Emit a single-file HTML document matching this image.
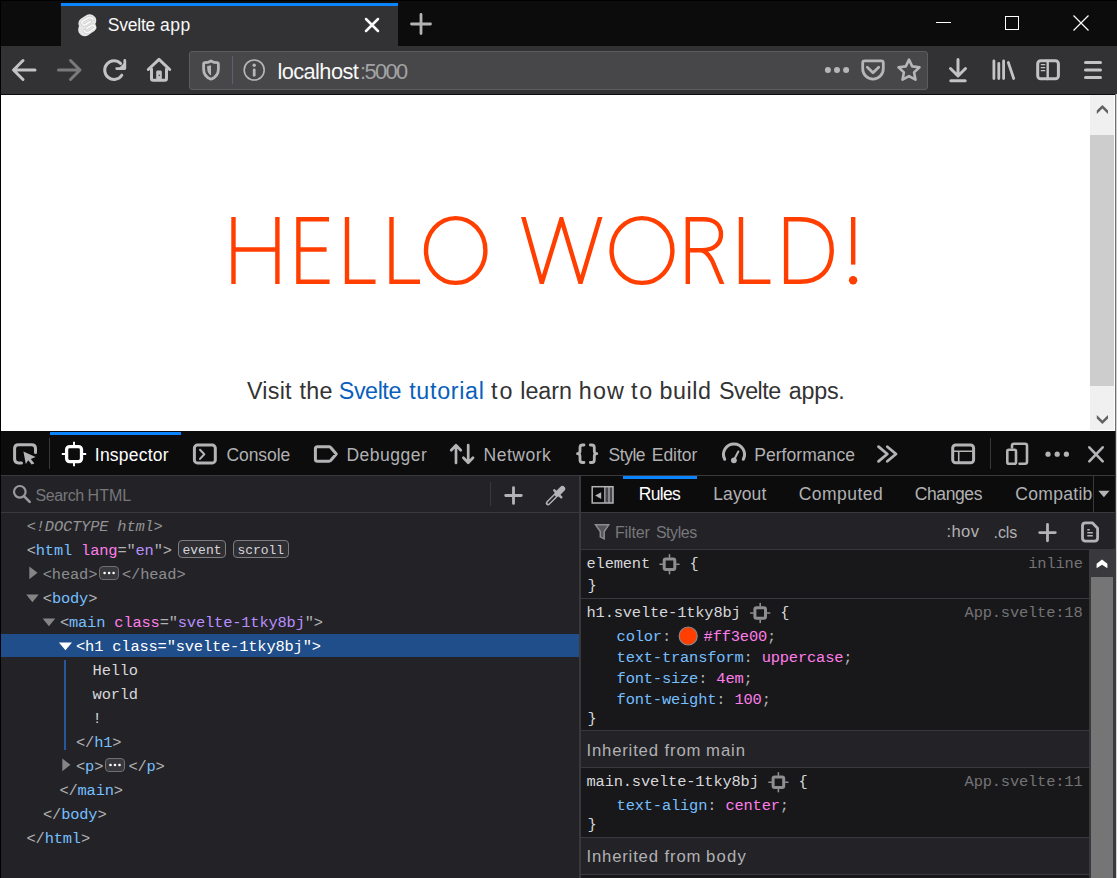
<!DOCTYPE html>
<html lang="en"><head><meta charset="utf-8"><title>Svelte app</title>
<style>
html,body{margin:0;padding:0;background:#0c0c0d;}
body{width:1117px;height:878px;overflow:hidden;}
#root{position:relative;width:1117px;height:878px;overflow:hidden;background:#0c0c0d;font-family:"Liberation Sans",sans-serif;}
#root div,#root svg{position:absolute;}
.t{position:absolute;white-space:pre;display:block;}
.s{font-family:"Liberation Sans",sans-serif;}
.m{font-family:"Liberation Mono",monospace;}
.ln{background:#38383d;}

</style></head>
<body>
<div id="root">
<!-- ================= window frame ================= -->
<div style="left:0;top:0;width:1117px;height:46px;background:#0c0c0d"></div>
<div style="left:0;top:0;width:1117px;height:1px;background:#000"></div>
<!-- selected tab -->
<div style="left:60.600px;top:3px;width:337.400px;height:43px;background:#323234"></div>
<div style="left:60.600px;top:3px;width:337.400px;height:3px;background:#0a84ff"></div>
<!-- nav bar -->
<div style="left:0;top:46px;width:1117px;height:48px;background:#323234"></div>
<div style="left:0;top:94px;width:1117px;height:1px;background:#0c0c0d"></div>
<!-- url bar -->
<div style="left:189px;top:51px;width:739px;height:39px;background:#474749;border:1px solid #5c5c5e;box-sizing:border-box;border-radius:3px"></div>
<div style="left:232px;top:56px;width:1px;height:28px;background:#5b6172"></div>

<!-- ================= page ================= -->
<div style="left:1px;top:95px;width:1114px;height:336px;background:#fff"></div>
<div style="left:1090px;top:95px;width:24px;height:335px;background:#f0f0f0"></div>
<div style="left:1090px;top:135px;width:24px;height:251px;background:#cdcdcd"></div>
<svg style="left:1090px;top:95px" width="25" height="336" viewBox="0 0 25 336">
  <path d="M6.8 15.6L12.4 9.9L18 15.6V19.1L12.4 13.4L6.8 19.100Z" fill="#606060"/>
  <path d="M6.8 323.400L12.4 329.100L18 323.400V319.900L12.4 325.600L6.8 319.900Z" fill="#606060"/>
</svg>

<!-- H1 drawn as thin strokes -->
<svg id="h1" style="left:0;top:95px" width="1090" height="336" viewBox="0 95 1090 336">
<defs><clipPath id="cap"><rect x="500" y="217" width="120" height="67"/></clipPath><clipPath id="cap2"><rect x="680" y="215" width="60" height="69"/></clipPath></defs>
<g fill="none" stroke="#ff3e00" stroke-width="4.4">
  <!-- H -->
  <path d="M233.5 217V284M277.4 217V284M233.5 249.5H277.4"/>
  <!-- E -->
  <path d="M329 219.2H298.4V281.8H329.6M298.4 249.5H326.6"/>
  <!-- L L -->
  <path d="M347 217V281.8H375.5"/>
  <path d="M391.5 217V281.8H420"/>
  <!-- O -->
  <ellipse cx="455.700" cy="250.5" rx="29.700" ry="32.4"/>
  <!-- W -->
  <path clip-path="url(#cap)" d="M522.800 215L541.800 283L561.400 219L580.500 283L600.800 215"/>
  <!-- O -->
  <ellipse cx="642" cy="250.5" rx="30.400" ry="32.4"/>
  <!-- R -->
  <path clip-path="url(#cap2)" d="M687.8 284V219.2H703C715 219.2 721 225.500 721 234.500C721 244 713.500 250.200 702 250.200H687.8M701 250.200C706.500 251.500 709.500 255.500 712.300 261L723.300 287"/>
  <!-- L -->
  <path d="M741 217V281.8H770.4"/>
  <!-- D -->
  <path d="M786.1 219.2V281.8H800C820 281.8 831.7 270 831.7 250C831.7 231 820 219.2 800 219.2Z"/>
  <!-- ! -->
  <path d="M853.2 217V264.600"/>
</g>
<circle cx="853.100" cy="280.200" r="4.200" fill="#ff3e00"/>
</svg>

<!-- ================= devtools ================= -->
<div style="left:0;top:431px;width:1117px;height:447px;background:#0c0c0d"></div>
<div style="left:50px;top:432px;width:131px;height:3px;background:#0a84ff"></div>
<div class="ln" style="left:1px;top:475px;width:1114px;height:1px"></div>
<!-- left pane -->
<div style="left:1px;top:476px;width:578px;height:402px;background:#232327"></div>
<div class="ln" style="left:1px;top:512px;width:1114px;height:1px"></div>
<!-- selected row -->
<div style="left:1px;top:633.5px;width:579px;height:23.5px;background:#204e8a"></div>
<!-- guide line -->
<div style="left:64.2px;top:660px;width:1.5px;height:89.5px;background:#26579a"></div>
<!-- right pane -->
<div style="left:581px;top:513px;width:534px;height:36px;background:#232327"></div>
<div class="ln" style="left:581px;top:549px;width:534px;height:1px"></div>
<div style="left:581px;top:550px;width:508px;height:328px;background:#18181a"></div>
<div class="ln" style="left:581px;top:598px;width:508px;height:1px"></div>
<div class="ln" style="left:581px;top:730px;width:508px;height:1px"></div>
<div style="left:581px;top:731px;width:508px;height:36px;background:#232327"></div>
<div class="ln" style="left:581px;top:767px;width:508px;height:1px"></div>
<div class="ln" style="left:581px;top:837px;width:508px;height:1px"></div>
<div style="left:581px;top:838px;width:508px;height:36px;background:#232327"></div>
<div class="ln" style="left:581px;top:874px;width:508px;height:1px"></div>
<!-- rules scrollbar -->
<div style="left:1089px;top:550px;width:26px;height:328px;background:#39393d"></div>
<div style="left:1091px;top:577px;width:22px;height:301px;background:#757575"></div>
<svg style="left:1089px;top:550px" width="26" height="27" viewBox="0 0 26 27"><path d="M7.600 13.700L13 9.600L18.400 13.700V18.300L13 14.800L7.600 18.300Z" fill="#ffffff"/></svg>
<div style="left:623px;top:476px;width:74px;height:3px;background:#0a84ff"></div>
<!-- splitter -->
<div class="ln" style="left:579px;top:476px;width:2px;height:402px"></div>
<!-- toolbar separators -->
<div style="left:49px;top:438px;width:1px;height:31px;background:#38383d"></div>
<div style="left:990px;top:438px;width:1px;height:31px;background:#38383d"></div>
<div style="left:490px;top:482px;width:1px;height:24px;background:#38383d"></div>
<div style="left:1093px;top:476px;width:1px;height:36px;background:#38383d"></div>

<!-- window side borders -->
<div style="left:0;top:0;width:1px;height:878px;background:#000"></div>
<div style="left:1115px;top:94px;width:1px;height:337px;background:#6e6e6e"></div>
<div style="left:1115px;top:431px;width:1px;height:447px;background:#3c3c3e"></div>
<div style="left:1116px;top:94px;width:1px;height:784px;background:#cfcfcf"></div>

<!-- ================= icon overlay (absolute pixel coords) ================= -->
<svg id="icons" style="left:0;top:0" width="1117" height="878" viewBox="0 0 1117 878" fill="none" stroke-linecap="round" stroke-linejoin="round">

<!-- ===== tab bar ===== -->
<!-- svelte favicon -->
<g id="favicon" transform="translate(87.15 25.05) scale(0.925 0.94) translate(-84 -25.75)">
  <path d="M92.6 17.2c-2.2-3.1-6.500-4.000-9.600-2.000l-5.500 3.500c-1.500 0.900-2.500 2.500-2.800 4.200-0.300 1.400 0 2.900 0.600 4.200-0.500 0.700-0.800 1.500-0.900 2.300-0.300 1.800 0.100 3.600 1.100 5.100 2.200 3.100 6.500 4.000 9.600 2.000l5.500-3.500c1.500-0.900 2.500-2.500 2.800-4.200 0.300-1.400 0-2.900-0.600-4.200 0.500-0.700 0.800-1.500 0.900-2.300 0.400-1.800 0-3.600-1.100-5.100z" fill="#e6e6e6" stroke="none"/>
  <path d="M90.3 19.6c-1.300-1.900-3.900-2.400-5.800-1.200l-4.600 2.900c-1.100 0.700-1.500 2.100-0.900 3.200 0.700 1.200 2.100 1.500 3.300 0.800l5.300-3.300M80.700 31.900c1.300 1.900 3.900 2.400 5.800 1.200l4.600-2.900c1.100-0.700 1.500-2.100 0.900-3.200-0.700-1.200-2.100-1.500-3.300-0.800l-5.300 3.300" stroke="#cfcfcf" stroke-width="3.400"/>
  <path d="M90.3 19.6c-1.300-1.900-3.900-2.400-5.800-1.200l-4.600 2.900c-1.100 0.700-1.500 2.100-0.900 3.200 0.700 1.200 2.100 1.500 3.300 0.800l5.300-3.300M80.700 31.900c1.300 1.900 3.900 2.400 5.800 1.200l4.600-2.900c1.100-0.700 1.500-2.100 0.900-3.200-0.700-1.200-2.100-1.500-3.300-0.800l-5.300 3.300" stroke="#f7f7f7" stroke-width="1.900"/>
</g>
<!-- tab close -->
<path d="M366 19L378 31M378 19L366 31" stroke="#f9f9fa" stroke-width="2.5"/>
<!-- new tab + -->
<path d="M411.5 24H430.5M421 14.500V33.500" stroke="#b4b4b6" stroke-width="2.8"/>
<!-- window controls -->
<g stroke="#ffffff" stroke-width="1.1" stroke-linecap="butt" stroke-linejoin="miter" shape-rendering="crispEdges">
  <path d="M936 22.500H951"/>
  <rect x="1005.500" y="16.500" width="13" height="13"/>
</g>
<path d="M1073.500 15.500L1088.500 30.500M1088.500 15.500L1073.500 30.500" stroke="#ffffff" stroke-width="1.2" stroke-linecap="butt"/>

<!-- ===== nav bar ===== -->
<g stroke="#c3c3c5" stroke-width="3">
  <!-- back -->
  <path d="M35 70H14M23 60.500L13.500 70L23 79.500"/>
  <!-- reload -->
  <path d="M121.800 75.200A9.300 9.300 0 1 1 120.600 63.500"/>
  <path d="M124.800 60.500V68.600H116.700" stroke-width="2.800"/>
  <path d="M124.800 62.300V68.600H118.500Z" fill="#c3c3c5" stroke="none"/>
  <!-- home -->
  <path d="M148.300 69.500L159 59.300L169.700 69.500" />
  <path d="M151.500 69V78.500Q151.500 80.300 153.300 80.300H164.700Q166.500 80.300 166.500 78.500V69" />
  <path d="M156.200 80.500V72Q156.200 70.600 157.600 70.600H160.400Q161.800 70.600 161.800 72V80.500Z" fill="#c3c3c5" stroke="none"/><circle cx="159.300" cy="75.400" r="0.800" fill="#555557" stroke="none"/>
  <!-- shield -->
  <path d="M211 60.900C209 62 206.500 62.600 204.600 62.700Q203.600 62.800 203.600 63.800V69C203.600 74.800 207.400 77.900 211 79.200C214.600 77.900 218.400 74.800 218.400 69V63.800Q218.400 62.800 217.400 62.700C215.500 62.600 213 62 211 60.900Z" stroke="#b6b6b8" stroke-width="2.800"/>
  <path d="M211 65.200C209.500 65.700 208.300 66 207.200 66.100V68.700C207.200 71.700 208.700 74 211 75.400Z" fill="#b6b6b8" stroke="none"/>
  <!-- info -->
  <circle cx="254.200" cy="70" r="10" stroke-width="1.600" stroke="#b6b6b8"/>
  <path d="M254.200 69.800V75.300" stroke="#b6b6b8" stroke-width="2.800"/>
  <circle cx="254.200" cy="65.200" r="1.700" fill="#b6b6b8" stroke="none"/>
  <!-- page action dots -->
  <g fill="#b6b6b8" stroke="none"><circle cx="827.900" cy="70" r="3"/><circle cx="837" cy="70" r="3"/><circle cx="846.100" cy="70" r="3"/></g>
  <!-- pocket -->
  <path d="M864.700 60.800H881.300Q883.300 60.800 883.300 62.800V68.800A10.300 10.300 0 0 1 862.700 68.800V62.800Q862.700 60.800 864.700 60.800Z" stroke="#b6b6b8" stroke-width="2.800"/>
  <path d="M867.300 67.200L873 72.700L878.700 67.200" stroke="#b6b6b8" stroke-width="2.800"/>
  <!-- star -->
  <path d="M909 59.600L912.200 66.400L919.500 67.300L914.100 72.400L915.500 79.700L909 76.100L902.500 79.700L903.900 72.400L898.500 67.300L905.800 66.400Z" stroke="#b6b6b8" stroke-width="2.600"/>
  <!-- download -->
  <path d="M958 59.500V75.500M950.500 68.500L958 76L965.500 68.500M950.800 80.700H965.200"/>
  <!-- library -->
  <path d="M993.900 61V78.500M998.800 63.500V78.500M1003.600 61V78.500M1008.300 62.500L1013.700 78.500" stroke-width="2.800"/>
  <!-- sidebar -->
  <rect x="1037.700" y="60.800" width="20.700" height="18" rx="3"/>
  <path d="M1047.700 61V79" stroke-width="2.400"/>
  <path d="M1041.300 64.700H1044.700M1041.300 67.700H1044.700M1041.300 70.700H1044.700" stroke-width="1.300"/>
  <!-- hamburger -->
  <path d="M1085.500 62.500H1100.500M1085.500 70H1100.500M1085.500 77.500H1100.500"/>
</g>
<!-- forward (disabled) -->
<path d="M58.500 70H79.500M70.500 60.500L80 70L70.500 79.500" stroke="#7a7a7c" stroke-width="3"/>

<!-- ===== devtools toolbar ===== -->
<g stroke="#b4b4b6" stroke-width="3">
  <!-- picker -->
  <path d="M21.500 462.900H18.500Q14.600 462.900 14.600 459V448.600Q14.600 444.700 18.500 444.700H31.600Q35.500 444.700 35.500 448.600V452.500"/>
  <path d="M23.400 451.400L35.600 457L30.800 459L34.400 463.400L31.600 464.600L28.300 460.300L25.800 464Z" fill="#b4b4b6" stroke="none"/>
  <!-- console -->
  <rect x="194.400" y="445.100" width="20.900" height="17.800" rx="3"/>
  <path d="M200 449.700L204.300 454.300L200 458.900" stroke-width="2"/>
  <!-- debugger -->
  <path d="M317.400 446.800H329Q330 446.800 330.700 447.500L336.300 454L330.700 460.500Q330 461.200 329 461.200H317.400Q315.400 461.200 315.400 459.200V448.800Q315.400 446.800 317.400 446.800Z"/>
  <!-- network -->
  <path d="M456 463V445.500M451.200 450.200L456 445.300L460.800 450.200M468.200 445V462.500M463.400 457.800L468.200 462.700L473 457.800" stroke-width="2.700"/>
  <!-- style editor braces -->
  <path d="M584 445H582.500Q580 445 580 447.500V451Q580 453.700 577.500 453.700Q580 453.700 580 456.400V460Q580 462.500 582.500 462.500H584" stroke-width="2.800"/>
  <path d="M590.300 445H591.800Q594.300 445 594.300 447.500V451Q594.300 453.700 596.800 453.700Q594.300 453.700 594.300 456.400V460Q594.300 462.500 591.800 462.500H590.300" stroke-width="2.800"/>
  <!-- performance -->
  <path d="M724.700 459.300A10.500 10.500 0 1 1 743.300 459.300"/>
  <path d="M734 460L738.300 451.500" stroke-width="2"/>
  <circle cx="733.900" cy="460.300" r="2.900" fill="#b4b4b6" stroke="none"/>
  <!-- chevrons -->
  <path d="M878.500 446.700L887.300 454L878.500 461.300M887.300 446.700L896 454L887.300 461.300" stroke-width="2.800"/>
  <!-- iframe picker -->
  <rect x="952.700" y="445" width="20.900" height="17.700" rx="3"/>
  <path d="M953 451.200H973.500M958.700 451.500V462.500" stroke-width="1.600"/>
  <!-- responsive -->
  <path d="M1012 447.500V445.700Q1012 443.700 1014 443.700H1025Q1027 443.700 1027 445.700V461.700Q1027 463.700 1025 463.700H1019.500" stroke-width="2.600"/>
  <rect x="1007.300" y="449.800" width="8.700" height="14" rx="1.500" stroke-width="2.600"/>
  <!-- meatball -->
  <g fill="#b4b4b6" stroke="none"><circle cx="1048" cy="454.200" r="2.600"/><circle cx="1057.200" cy="454.200" r="2.600"/><circle cx="1066.400" cy="454.200" r="2.600"/></g>
  <!-- close -->
  <path d="M1089.300 447.300L1102.700 461.300M1102.700 447.300L1089.300 461.300" stroke-width="2.600"/>
</g>
<!-- inspector (selected, white) -->
<g stroke="#ffffff">
  <rect x="66.600" y="446.600" width="14.900" height="15" rx="3" stroke-width="3.300"/>
  <path d="M74 441.800V445.500M74 463M74 462.800V466.200M61.800 454H65.500M82.600 454H86.200" stroke-width="1.900" stroke-linecap="butt"/>
</g>

<!-- ===== search row ===== -->
<circle cx="19.800" cy="491.800" r="5.800" stroke="#9a9a9c" stroke-width="2.200"/>
<path d="M24.200 496.300L29.700 501.800" stroke="#9a9a9c" stroke-width="2.600"/>
<path d="M505.700 495.500H521.300M513.500 487.600V503.400" stroke="#b4b4b6" stroke-width="2.800"/>
<!-- eyedropper -->
<g>
  <path d="M555.300 495.800L548 503.100" stroke="#b4b4b6" stroke-width="4.600"/>
  <path d="M555.300 495.800L548.300 502.800" stroke="#232327" stroke-width="1.800"/>
  <path d="M557.200 493.900L562.400 488.700" stroke="#b4b4b6" stroke-width="5.600"/>
  <path d="M554.300 490.300L561.300 497.300" stroke="#b4b4b6" stroke-width="2.400"/>
</g>
<!-- sidebar toggle -->
<g stroke="#b4b4b6" stroke-linejoin="miter" stroke-linecap="butt">
  <rect x="605" y="487" width="8" height="16" fill="#49494d" stroke="none"/>
  <rect x="592.200" y="486.700" width="20.800" height="16.300" stroke-width="1.500"/>
  <path d="M604.800 487V503M609 487V503" stroke-width="1.200"/>
  <path d="M601.200 492.200V499L595.200 495.600Z" fill="#b4b4b6" stroke="none"/>
</g>
<!-- sidebar tabs dropdown arrow -->
<path d="M1098.300 490.800H1109.500L1103.900 497.200Z" fill="#b4b4b6"/>

<!-- ===== filter row ===== -->
<path d="M595.500 524.800H608.700L604.200 531.600V538.800L600.300 536.800V531.600Z" fill="#55555a" stroke="#8c8c8e" stroke-width="1.500" stroke-linejoin="miter"/>
<path d="M1039.700 532.600H1055.300M1047.500 524.400V540.800" stroke="#b4b4b6" stroke-width="2.800"/>
<!-- doc icon -->
<path d="M1085.500 522.800H1092.300L1097.600 528.300V538.100Q1097.600 541.100 1094.600 541.100H1085.500Q1082.500 541.100 1082.500 538.100V525.800Q1082.500 522.800 1085.500 522.800Z" stroke="#b4b4b6" stroke-width="2.800"/>
<path d="M1087.300 529.700H1089.800M1087.300 532.700H1092.800M1087.300 535.800H1092.800" stroke="#b4b4b6" stroke-width="1.500" stroke-linecap="butt"/>

<!-- ===== rules target icons ===== -->
<g id="tg" stroke="#8e8e90">
  <g transform="translate(669.500 564.300)"><rect x="-5.300" y="-5.300" width="10.600" height="10.600" rx="1.500" stroke-width="3"/><path d="M0 -9.500V-7M0 7V9.500M-9.500 0H-7M7 0H9.500" stroke-width="1.600"/></g>
  <g transform="translate(760.200 613)"><rect x="-5.300" y="-5.300" width="10.600" height="10.600" rx="1.500" stroke-width="3"/><path d="M0 -9.500V-7M0 7V9.500M-9.500 0H-7M7 0H9.500" stroke-width="1.600"/></g>
  <g transform="translate(778.400 782.200)"><rect x="-5.300" y="-5.300" width="10.600" height="10.600" rx="1.500" stroke-width="3"/><path d="M0 -9.500V-7M0 7V9.500M-9.500 0H-7M7 0H9.500" stroke-width="1.600"/></g>
</g>
<!-- colour swatch -->
<circle cx="688.200" cy="636" r="9" fill="#ff3e00" stroke="#8a8a8c" stroke-width="1.200"/>

<!-- ===== markup twisties ===== -->
<g stroke="none">
  <path d="M29.300 566.500V579.200L37.500 572.850Z" fill="#858588"/>
  <path d="M26.200 594.400H38.700L32.450 602.300Z" fill="#858588"/>
  <path d="M42.700 618.400H55.200L48.950 626.300Z" fill="#858588"/>
  <path d="M58.900 642.600H72L65.450 650.200Z" fill="#ffffff"/>
  <path d="M62.300 758.500V771.200L70.500 764.850Z" fill="#858588"/>
</g>
</svg>

<!-- markup badges -->
<div style="left:178px;top:540.200px;width:47.500px;height:17.600px;border:1px solid #7d7d80;border-radius:4px;box-sizing:border-box;background:#2e2e33"></div>
<div style="left:233px;top:540.200px;width:55.500px;height:17.600px;border:1px solid #7d7d80;border-radius:4px;box-sizing:border-box;background:#2e2e33"></div>
<div style="left:99px;top:566px;width:20px;height:14px;border:1px solid #707073;border-radius:4px;box-sizing:border-box;background:#38383d"></div>
<div style="left:105px;top:758px;width:20px;height:14px;border:1px solid #707073;border-radius:4px;box-sizing:border-box;background:#38383d"></div>
<svg style="left:0;top:0" width="1117" height="878" viewBox="0 0 1117 878"><g fill="#ffffff">
<circle cx="104.600" cy="573" r="1.300"/><circle cx="109.100" cy="573" r="1.300"/><circle cx="113.600" cy="573" r="1.300"/>
<circle cx="110.500" cy="765" r="1.300"/><circle cx="115" cy="765" r="1.300"/><circle cx="119.500" cy="765" r="1.300"/>
</g></svg>


<span class="t s" id="t0" style="left:107.70px;top:13.54px;font-size:17.5px;line-height:23px;color:#f9f9fa;letter-spacing:-0.201px;">Svelte</span>
<span class="t s" id="t1" style="left:160.00px;top:13.54px;font-size:17.5px;line-height:23px;color:#f9f9fa;letter-spacing:0.517px;">app</span>
<span class="t s" id="t2" style="left:277.40px;top:57.95px;font-size:21.8px;line-height:28px;color:#f9f9fa;letter-spacing:-0.571px;">localhost</span>
<span class="t s" id="t3" style="left:360.00px;top:57.95px;font-size:21.8px;line-height:28px;color:#a3a3a5;letter-spacing:-1.606px;">:5000</span>
<span class="t s" id="t4" style="left:247.00px;top:375.63px;font-size:23.3px;line-height:30px;color:#333333;letter-spacing:0.246px;">Visit</span>
<span class="t s" id="t5" style="left:299.40px;top:375.63px;font-size:23.3px;line-height:30px;color:#333333;letter-spacing:0.335px;">the</span>
<span class="t s" id="t6" style="left:338.80px;top:375.63px;font-size:23.3px;line-height:30px;color:#0a5fbd;letter-spacing:-0.438px;">Svelte</span>
<span class="t s" id="t7" style="left:409.20px;top:375.63px;font-size:23.3px;line-height:30px;color:#0a5fbd;letter-spacing:0.679px;">tutorial</span>
<span class="t s" id="t8" style="left:490.90px;top:375.63px;font-size:23.3px;line-height:30px;color:#333333;letter-spacing:2.027px;">to</span>
<span class="t s" id="t9" style="left:520.30px;top:375.63px;font-size:23.3px;line-height:30px;color:#333333;letter-spacing:-0.062px;">learn</span>
<span class="t s" id="t10" style="left:578.70px;top:375.63px;font-size:23.3px;line-height:30px;color:#333333;letter-spacing:1.243px;">how</span>
<span class="t s" id="t11" style="left:630.90px;top:375.63px;font-size:23.3px;line-height:30px;color:#333333;letter-spacing:1.827px;">to</span>
<span class="t s" id="t12" style="left:659.40px;top:375.63px;font-size:23.3px;line-height:30px;color:#333333;letter-spacing:0.609px;">build</span>
<span class="t s" id="t13" style="left:719.10px;top:375.63px;font-size:23.3px;line-height:30px;color:#333333;letter-spacing:-0.538px;">Svelte</span>
<span class="t s" id="t14" style="left:788.80px;top:375.63px;font-size:23.3px;line-height:30px;color:#333333;letter-spacing:-0.255px;">apps.</span>
<span class="t s" id="t15" style="left:94.80px;top:444.04px;font-size:17.5px;line-height:23px;color:#ffffff;letter-spacing:0.218px;">Inspector</span>
<span class="t s" id="t16" style="left:226.40px;top:444.04px;font-size:17.5px;line-height:23px;color:#b1b1b3;letter-spacing:-0.046px;">Console</span>
<span class="t s" id="t17" style="left:346.50px;top:444.04px;font-size:17.5px;line-height:23px;color:#b1b1b3;letter-spacing:0.481px;">Debugger</span>
<span class="t s" id="t18" style="left:483.60px;top:444.04px;font-size:17.5px;line-height:23px;color:#b1b1b3;letter-spacing:0.495px;">Network</span>
<span class="t s" id="t19" style="left:608.60px;top:444.04px;font-size:17.5px;line-height:23px;color:#b1b1b3;letter-spacing:-0.493px;">Style</span>
<span class="t s" id="t20" style="left:651.80px;top:444.04px;font-size:17.5px;line-height:23px;color:#b1b1b3;letter-spacing:-0.058px;">Editor</span>
<span class="t s" id="t21" style="left:754.20px;top:444.04px;font-size:17.5px;line-height:23px;color:#b1b1b3;letter-spacing:0.055px;">Performance</span>
<span class="t s" id="t22" style="left:35.50px;top:484.96px;font-size:16px;line-height:21px;color:#77777a;letter-spacing:-0.399px;">Search</span>
<span class="t s" id="t23" style="left:87.60px;top:484.96px;font-size:16px;line-height:21px;color:#77777a;letter-spacing:-0.019px;">HTML</span>
<span class="t s" id="t24" style="left:638.80px;top:483.34px;font-size:17.5px;line-height:23px;color:#ffffff;letter-spacing:-0.698px;">Rules</span>
<span class="t s" id="t25" style="left:713.30px;top:483.34px;font-size:17.5px;line-height:23px;color:#b1b1b3;letter-spacing:0.084px;">Layout</span>
<span class="t s" id="t26" style="left:798.70px;top:483.34px;font-size:17.5px;line-height:23px;color:#b1b1b3;letter-spacing:0.470px;">Computed</span>
<span class="t s" id="t27" style="left:914.80px;top:483.34px;font-size:17.5px;line-height:23px;color:#b1b1b3;letter-spacing:-0.400px;">Changes</span>
<span class="t s" id="t28" style="left:1015.30px;top:483.34px;font-size:17.5px;line-height:23px;color:#b1b1b3;letter-spacing:0.305px;">Compatib</span>
<span class="t s" id="t29" style="left:614.90px;top:521.56px;font-size:16px;line-height:21px;color:#77777a;letter-spacing:-0.125px;">Filter</span>
<span class="t s" id="t30" style="left:655.90px;top:521.56px;font-size:16px;line-height:21px;color:#77777a;letter-spacing:-0.454px;">Styles</span>
<span class="t s" id="t31" style="left:946.60px;top:520.85px;font-size:16.6px;line-height:22px;color:#b1b1b3;letter-spacing:0.344px;">:hov</span>
<span class="t s" id="t32" style="left:993.60px;top:521.56px;font-size:16px;line-height:21px;color:#b1b1b3;letter-spacing:-0.133px;">.cls</span>
<span class="t s" id="t33" style="left:586.50px;top:739.51px;font-size:16.7px;line-height:22px;color:#b1b1b3;letter-spacing:0.817px;">Inherited</span>
<span class="t s" id="t34" style="left:664.50px;top:739.51px;font-size:16.7px;line-height:22px;color:#b1b1b3;letter-spacing:0.875px;">from</span>
<span class="t s" id="t35" style="left:706.10px;top:739.51px;font-size:16.7px;line-height:22px;color:#b1b1b3;letter-spacing:0.904px;">main</span>
<span class="t s" id="t36" style="left:586.50px;top:846.11px;font-size:16.7px;line-height:22px;color:#b1b1b3;letter-spacing:0.817px;">Inherited</span>
<span class="t s" id="t37" style="left:664.50px;top:846.11px;font-size:16.7px;line-height:22px;color:#b1b1b3;letter-spacing:0.875px;">from</span>
<span class="t s" id="t38" style="left:706.10px;top:846.11px;font-size:16.7px;line-height:22px;color:#b1b1b3;letter-spacing:1.186px;">body</span>
<span class="t m" id="t39" style="left:26.70px;top:516.90px;font-size:15.4px;line-height:20px;color:#939395;letter-spacing:-0.170px;font-style:italic;">&lt;!DOCTYPE html&gt;</span>
<span class="t m" id="t40" style="left:26.70px;top:540.90px;font-size:15.4px;line-height:20px;color:#b1b1b3;letter-spacing:-0.170px;"><span style="color:#b1b1b3">&lt;</span><span style="color:#75bfff">html</span> <span style="color:#ff7de9">lang</span><span style="color:#b1b1b3">="</span><span style="color:#b98eff">en</span><span style="color:#b1b1b3">"&gt;</span></span>
<span class="t m" id="t41" style="left:42.80px;top:564.90px;font-size:15.4px;line-height:20px;color:#8c8c8f;letter-spacing:-0.170px;">&lt;head&gt;</span>
<span class="t m" id="t42" style="left:122.00px;top:564.90px;font-size:15.4px;line-height:20px;color:#8c8c8f;letter-spacing:-0.170px;">&lt;/head&gt;</span>
<span class="t m" id="t43" style="left:42.80px;top:588.90px;font-size:15.4px;line-height:20px;color:#b1b1b3;letter-spacing:-0.170px;"><span style="color:#b1b1b3">&lt;</span><span style="color:#75bfff">body</span><span style="color:#b1b1b3">&gt;</span></span>
<span class="t m" id="t44" style="left:59.90px;top:612.90px;font-size:15.4px;line-height:20px;color:#b1b1b3;letter-spacing:-0.170px;"><span style="color:#b1b1b3">&lt;</span><span style="color:#75bfff">main</span> <span style="color:#ff7de9">class</span><span style="color:#b1b1b3">="</span><span style="color:#b98eff">svelte-1tky8bj</span><span style="color:#b1b1b3">"&gt;</span></span>
<span class="t m" id="t45" style="left:76.00px;top:636.90px;font-size:15.4px;line-height:20px;color:#ffffff;letter-spacing:-0.170px;">&lt;h1 class="svelte-1tky8bj"&gt;</span>
<span class="t m" id="t46" style="left:92.60px;top:660.90px;font-size:15.4px;line-height:20px;color:#d7d7db;letter-spacing:-0.170px;">Hello</span>
<span class="t m" id="t47" style="left:92.60px;top:684.90px;font-size:15.4px;line-height:20px;color:#d7d7db;letter-spacing:-0.170px;">world</span>
<span class="t m" id="t48" style="left:92.50px;top:708.90px;font-size:15.4px;line-height:20px;color:#d7d7db;letter-spacing:-0.170px;">!</span>
<span class="t m" id="t49" style="left:76.00px;top:732.90px;font-size:15.4px;line-height:20px;color:#b1b1b3;letter-spacing:-0.170px;"><span style="color:#b1b1b3">&lt;/</span><span style="color:#75bfff">h1</span><span style="color:#b1b1b3">&gt;</span></span>
<span class="t m" id="t50" style="left:76.00px;top:756.90px;font-size:15.4px;line-height:20px;color:#b1b1b3;letter-spacing:-0.170px;"><span style="color:#b1b1b3">&lt;</span><span style="color:#75bfff">p</span><span style="color:#b1b1b3">&gt;</span></span>
<span class="t m" id="t51" style="left:128.40px;top:756.90px;font-size:15.4px;line-height:20px;color:#b1b1b3;letter-spacing:-0.170px;"><span style="color:#b1b1b3">&lt;/</span><span style="color:#75bfff">p</span><span style="color:#b1b1b3">&gt;</span></span>
<span class="t m" id="t52" style="left:59.40px;top:780.90px;font-size:15.4px;line-height:20px;color:#b1b1b3;letter-spacing:-0.170px;"><span style="color:#b1b1b3">&lt;/</span><span style="color:#75bfff">main</span><span style="color:#b1b1b3">&gt;</span></span>
<span class="t m" id="t53" style="left:43.00px;top:804.90px;font-size:15.4px;line-height:20px;color:#b1b1b3;letter-spacing:-0.170px;"><span style="color:#b1b1b3">&lt;/</span><span style="color:#75bfff">body</span><span style="color:#b1b1b3">&gt;</span></span>
<span class="t m" id="t54" style="left:26.50px;top:828.90px;font-size:15.4px;line-height:20px;color:#b1b1b3;letter-spacing:-0.170px;"><span style="color:#b1b1b3">&lt;/</span><span style="color:#75bfff">html</span><span style="color:#b1b1b3">&gt;</span></span>
<span class="t m" id="t55" style="left:182.50px;top:541.74px;font-size:13.0px;line-height:17px;color:#d7d7db;letter-spacing:-0.001px;">event</span>
<span class="t m" id="t56" style="left:237.40px;top:541.74px;font-size:13.0px;line-height:17px;color:#d7d7db;letter-spacing:-0.051px;">scroll</span>
<span class="t m" id="t57" style="left:586.50px;top:553.90px;font-size:15.4px;line-height:20px;color:#d7d7db;letter-spacing:-0.170px;">element</span>
<span class="t m" id="t58" style="left:689.40px;top:553.90px;font-size:15.4px;line-height:20px;color:#d7d7db;letter-spacing:-0.170px;">{</span>
<span class="t m" id="t59" style="left:587.50px;top:576.20px;font-size:15.4px;line-height:20px;color:#d7d7db;letter-spacing:-0.170px;">}</span>
<span class="t m" id="t60" style="left:1028.30px;top:553.90px;font-size:15.4px;line-height:20px;color:#737376;letter-spacing:-0.170px;">inline</span>
<span class="t m" id="t61" style="left:586.50px;top:603.10px;font-size:15.4px;line-height:20px;color:#d7d7db;letter-spacing:-0.170px;">h1.svelte-1tky8bj</span>
<span class="t m" id="t62" style="left:780.20px;top:603.10px;font-size:15.4px;line-height:20px;color:#d7d7db;letter-spacing:-0.170px;">{</span>
<span class="t m" id="t63" style="left:964.60px;top:602.90px;font-size:15.4px;line-height:20px;color:#737376;letter-spacing:-0.170px;">App.svelte:18</span>
<span class="t m" id="t64" style="left:616.60px;top:626.90px;font-size:15.4px;line-height:20px;color:#b1b1b3;letter-spacing:-0.170px;"><span style="color:#75bfff">color</span><span style="color:#b1b1b3">:</span></span>
<span class="t m" id="t65" style="left:703.60px;top:626.90px;font-size:15.4px;line-height:20px;color:#b1b1b3;letter-spacing:-0.170px;"><span style="color:#ff7de9">#ff3e00</span><span style="color:#b1b1b3">;</span></span>
<span class="t m" id="t66" style="left:616.60px;top:647.90px;font-size:15.4px;line-height:20px;color:#b1b1b3;letter-spacing:-0.170px;"><span style="color:#75bfff">text-transform</span><span style="color:#b1b1b3">: </span><span style="color:#ff7de9">uppercase</span><span style="color:#b1b1b3">;</span></span>
<span class="t m" id="t67" style="left:616.60px;top:668.90px;font-size:15.4px;line-height:20px;color:#b1b1b3;letter-spacing:-0.170px;"><span style="color:#75bfff">font-size</span><span style="color:#b1b1b3">: </span><span style="color:#ff7de9">4em</span><span style="color:#b1b1b3">;</span></span>
<span class="t m" id="t68" style="left:616.60px;top:689.90px;font-size:15.4px;line-height:20px;color:#b1b1b3;letter-spacing:-0.170px;"><span style="color:#75bfff">font-weight</span><span style="color:#b1b1b3">: </span><span style="color:#ff7de9">100</span><span style="color:#b1b1b3">;</span></span>
<span class="t m" id="t69" style="left:587.50px;top:708.50px;font-size:15.4px;line-height:20px;color:#d7d7db;letter-spacing:-0.170px;">}</span>
<span class="t m" id="t70" style="left:586.50px;top:772.30px;font-size:15.4px;line-height:20px;color:#d7d7db;letter-spacing:-0.170px;">main.svelte-1tky8bj</span>
<span class="t m" id="t71" style="left:798.60px;top:772.30px;font-size:15.4px;line-height:20px;color:#d7d7db;letter-spacing:-0.170px;">{</span>
<span class="t m" id="t72" style="left:964.60px;top:771.90px;font-size:15.4px;line-height:20px;color:#737376;letter-spacing:-0.170px;">App.svelte:11</span>
<span class="t m" id="t73" style="left:616.60px;top:796.10px;font-size:15.4px;line-height:20px;color:#b1b1b3;letter-spacing:-0.170px;"><span style="color:#75bfff">text-align</span><span style="color:#b1b1b3">: </span><span style="color:#ff7de9">center</span><span style="color:#b1b1b3">;</span></span>
<span class="t m" id="t74" style="left:587.50px;top:815.40px;font-size:15.4px;line-height:20px;color:#d7d7db;letter-spacing:-0.170px;">}</span>
</div>
</body></html>
